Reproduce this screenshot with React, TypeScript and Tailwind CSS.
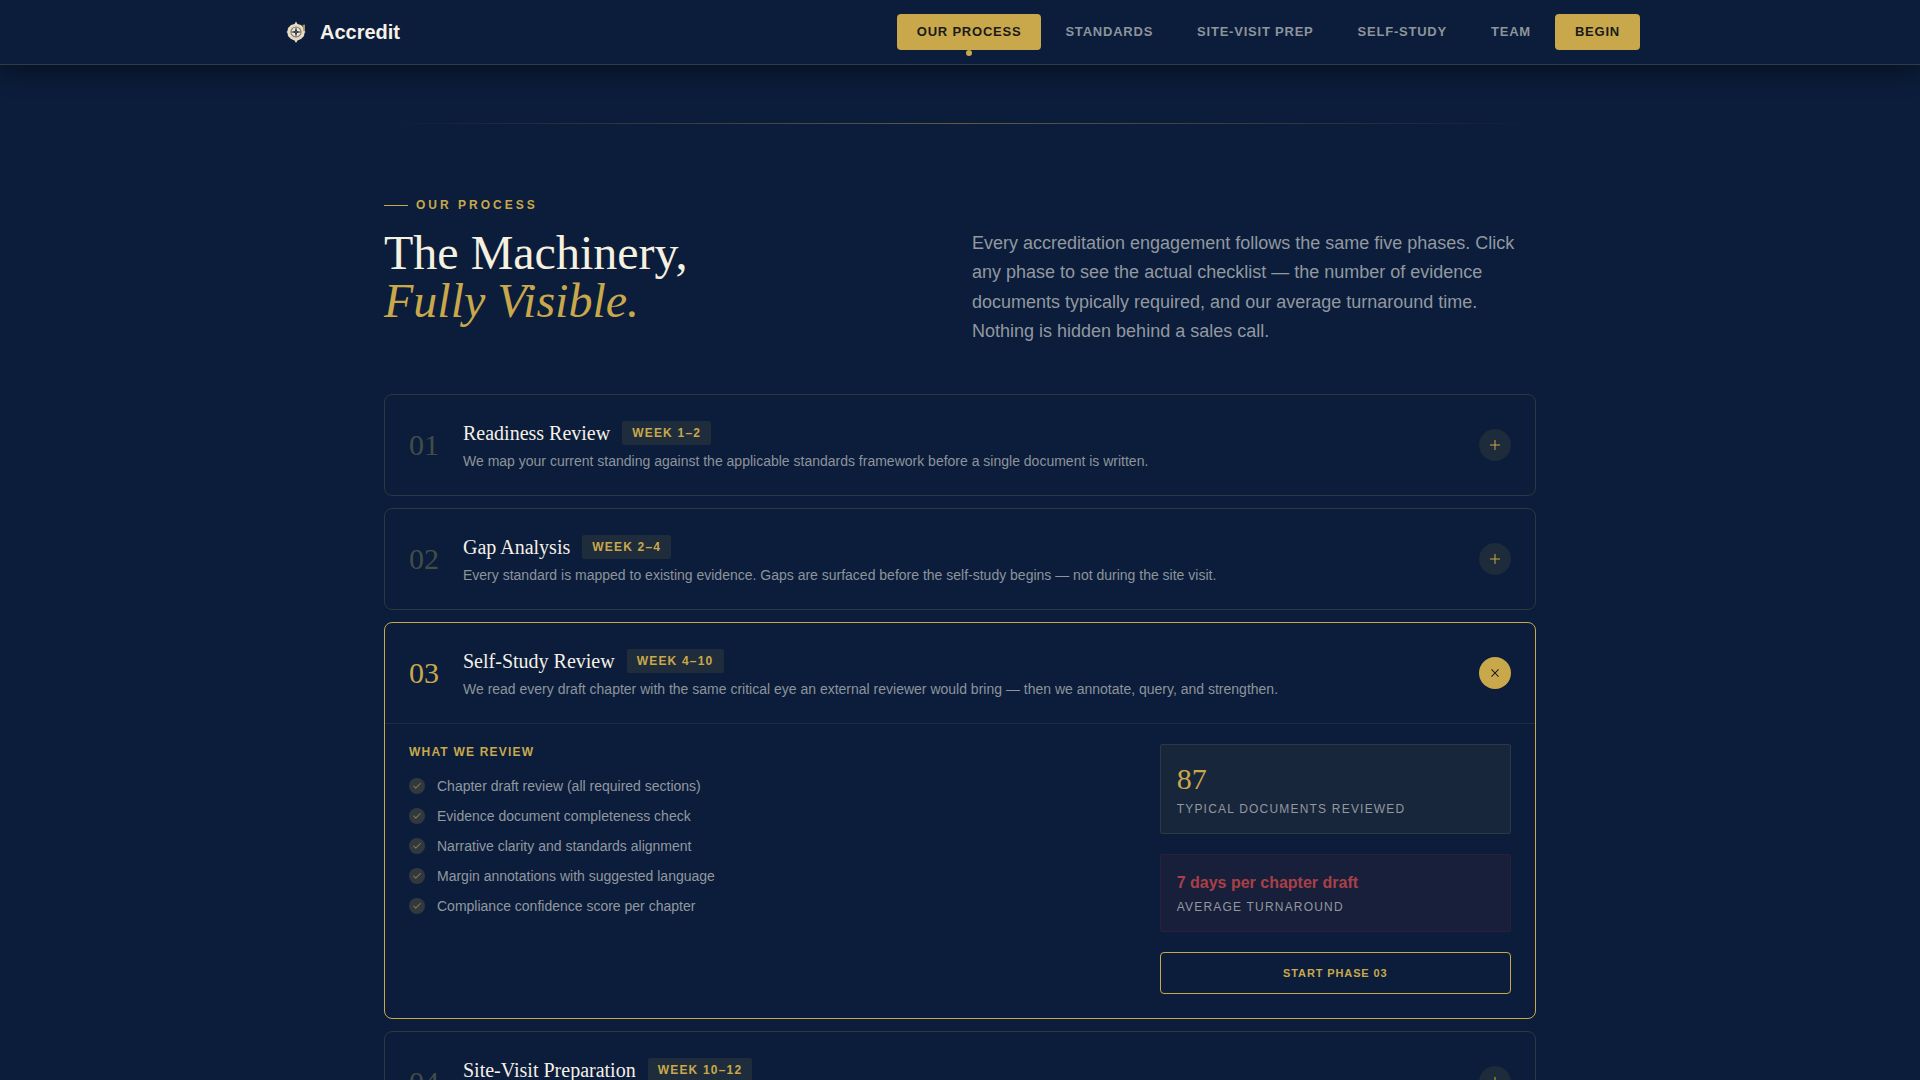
import { useState } from "react";
import { Check, Plus } from "lucide-react";

interface Phase {
  number: string;
  title: string;
  weeks: string;
  summary: string;
  checklist: string[];
  documents: number;
  turnaround: string;
}

const navLinks = ["Our Process", "Standards", "Site-Visit Prep", "Self-Study", "Team"];

const phases: Phase[] = [
  {
    number: "01",
    title: "Readiness Review",
    weeks: "Week 1–2",
    summary: "We map your current standing against the applicable standards framework before a single document is written.",
    checklist: ["Standards framework mapping", "Current standing summary"],
    documents: 24,
    turnaround: "5 days",
  },
  {
    number: "02",
    title: "Gap Analysis",
    weeks: "Week 2–4",
    summary: "Every standard is mapped to existing evidence. Gaps are surfaced before the self-study begins — not during the site visit.",
    checklist: ["Evidence inventory", "Gap register by standard"],
    documents: 52,
    turnaround: "10 days",
  },
  {
    number: "03",
    title: "Self-Study Review",
    weeks: "Week 4–10",
    summary: "We read every draft chapter with the same critical eye an external reviewer would bring — then we annotate, query, and strengthen.",
    checklist: [
      "Chapter draft review (all required sections)",
      "Evidence document completeness check",
      "Narrative clarity and standards alignment",
      "Margin annotations with suggested language",
      "Compliance confidence score per chapter",
    ],
    documents: 87,
    turnaround: "7 days per chapter draft",
  },
  {
    number: "04",
    title: "Site-Visit Preparation",
    weeks: "Week 10–12",
    summary: "Mock interviews, evidence room setup, and a full rehearsal before the visiting team arrives.",
    checklist: ["Mock interviews", "Evidence room setup"],
    documents: 36,
    turnaround: "3 days",
  },
];

function Logo() {
  return (
    <svg viewBox="0 0 32 32" className="h-8 w-8" aria-hidden="true">
      {/* compass ring with a point on each side */}
      <path
        d="M16 5.500l1.500 2.500 3.500 1 3 3 .5 3 1 1-1 1-.5 3-3 3-3.500 1.500L16 27l-1.500-2.500L11 23l-3-3-.5-3-1-1 1-1 .5-3 3-3 3.500-1z"
        fill="#e6dcc3"
      />
      <path d="M22.500 9l2.500-.5v6l-1.500 1z" fill="#a8905a" />
      <circle cx="16" cy="16" r="5" fill="#efe7d4" stroke="#8c8272" strokeWidth="1.200" />
      <path d="M16 10.500l1 4.500 4.500 1-4.500 1-1 4.500-1-4.500-4.500-1 4.500-1z" fill="#1b2540" />
      <circle cx="16" cy="16" r="1" fill="#5c6070" />
    </svg>
  );
}

function Header() {
  return (
    <header className="relative z-10 border-b border-[#2f3b45] bg-[#0b1d3a] shadow-[0_4px_24px_rgba(0,0,0,0.5)]">
      <div className="mx-auto flex h-16 max-w-[1440px] items-center justify-between px-10">
        <a href="#" className="flex items-center gap-2 text-xl font-bold text-[#f5f0e8]">
          <Logo />
          Accredit
        </a>
        <nav className="flex items-center gap-1 text-[13px] font-bold uppercase tracking-[0.78px]">
          {navLinks.map((link, i) => (
            <a
              key={link}
              href="#"
              className={
                i === 0
                  ? "relative flex h-9 items-center rounded bg-[#c9a84c] px-5 text-[#1a1a1a]"
                  : "flex h-9 items-center rounded px-5 text-[#8d949c] hover:text-[#c9a84c]"
              }>
              {link}
              {i === 0 && <span className="absolute -bottom-1.5 left-1/2 h-1.5 w-1.5 -translate-x-1/2 rounded-full bg-[#c9a84c]" />}
            </a>
          ))}
          <button className="h-9 rounded bg-[#c9a84c] px-5 font-bold uppercase tracking-[0.78px] text-[#1a1a1a]">Begin</button>
        </nav>
      </div>
    </header>
  );
}

function PhaseDetails({ phase }: { phase: Phase }) {
  return (
    <div className="grid grid-cols-[2fr_1fr] gap-12 border-t border-[#1c2e42] px-6 pt-5 pb-6">
      <div>
        <h4 className="mb-4 text-xs font-bold uppercase tracking-[1.2px] text-[#c9a84c]">What we review</h4>
        <ul className="flex flex-col gap-2.5">
          {phase.checklist.map((item) => (
            <li key={item} className="flex items-center gap-3 text-sm text-[#9298a0]">
              <span className="flex h-4 w-4 items-center justify-center rounded-full bg-[#31393e]">
                <Check className="h-2.5 w-2.5 text-[#8a7a48]" strokeWidth={2.5} />
              </span>
              {item}
            </li>
          ))}
        </ul>
      </div>
      <div className="flex flex-col gap-5">
        <div className="rounded-xs border border-[#2a3a42] bg-[#18263b] p-4">
          <p className="font-['Liberation_Serif',serif] text-3xl text-[#c9a84c]">{phase.documents}</p>
          <p className="mt-1 text-xs uppercase tracking-[1.2px] text-[#9298a0]">Typical documents reviewed</p>
        </div>
        <div className="rounded-xs border border-[#2b1f3b] bg-[#181f3a] p-4">
          <p className="text-base font-bold text-[#a94048]">{phase.turnaround}</p>
          <p className="mt-1 text-xs uppercase tracking-[1.2px] text-[#9298a0]">Average turnaround</p>
        </div>
        <button className="h-[42px] rounded border border-[#c9a84c] text-[11px] font-bold uppercase tracking-[0.88px] text-[#c9a84c]">
          Start phase {phase.number}
        </button>
      </div>
    </div>
  );
}

export default function App() {
  const [open, setOpen] = useState("03");

  return (
    <div className="min-h-screen bg-[#0b1d3a] font-['Liberation_Sans',Arial,sans-serif]">
      <Header />
      <main className="mx-auto max-w-6xl pt-[58px] pb-24">
        <div className="h-px bg-linear-to-r from-transparent via-[#c9a84c]/45 to-transparent" />

        <section className="pt-[73px]">
          <p className="mb-4 flex items-center gap-2 text-xs font-bold uppercase tracking-[3px] text-[#c9a84c]">
            <span className="h-px w-6 bg-[#c9a84c]" />
            Our Process
          </p>
          <div className="mb-12 grid grid-cols-2 gap-6">
            <h2 className="font-['Liberation_Serif',serif] text-5xl text-[#f5f0e0]">
              The Machinery,
              <br />
              <em className="text-[#c9a84c]">Fully Visible.</em>
            </h2>
            <p className="text-lg leading-relaxed text-[#9298a0]">
              Every accreditation engagement follows the same five phases. Click any phase to see the actual checklist — the number of
              evidence documents typically required, and our average turnaround time. Nothing is hidden behind a sales call.
            </p>
          </div>

          {/* Phase accordion */}
          <div className="flex flex-col gap-3">
            {phases.map((phase) => {
              const isOpen = phase.number === open;
              return (
                <div key={phase.number} className={isOpen ? "rounded-lg border border-[#c9a84c]" : "rounded-lg border border-[#2a3842]"}>
                  <button
                    onClick={() => setOpen(isOpen ? "" : phase.number)}
                    aria-expanded={isOpen}
                    className="flex w-full items-center gap-6 p-6 text-left">
                    <span
                      className={
                        isOpen
                          ? "font-['Liberation_Serif',serif] text-3xl text-[#c9a84c]"
                          : "font-['Liberation_Serif',serif] text-3xl text-[#434d48]"
                      }>
                      {phase.number}
                    </span>
                    <span className="flex-1">
                      <span className="flex h-7 items-center gap-3">
                        <span className="font-['Liberation_Serif',serif] text-xl text-[#f5f0e8]">{phase.title}</span>
                        <span className="rounded-xs bg-[#1f2c3b] px-2.5 py-1 text-xs font-bold uppercase tracking-[1.2px] text-[#c9a84c]">
                          {phase.weeks}
                        </span>
                      </span>
                      <span className="mt-1 block text-sm text-[#8d949c]">{phase.summary}</span>
                    </span>
                    <span
                      className={
                        isOpen
                          ? "flex h-8 w-8 rotate-45 items-center justify-center rounded-full bg-[#c9a84c] text-[#1a1a1a]"
                          : "flex h-8 w-8 items-center justify-center rounded-full bg-[#1d2b3a] text-[#c9a84c]"
                      }>
                      <Plus className="h-4 w-4" strokeWidth={1.5} />
                    </span>
                  </button>
                  {isOpen && <PhaseDetails phase={phase} />}
                </div>
              );
            })}
          </div>
        </section>
      </main>
    </div>
  );
}
